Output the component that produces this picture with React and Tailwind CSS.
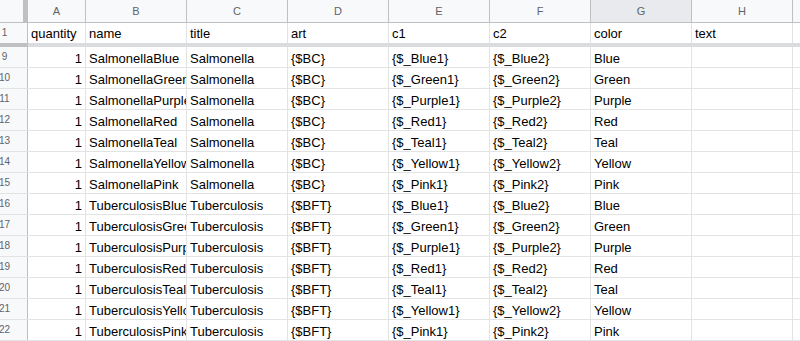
const COLS = [
  { key: "A", w: "w-[58px]" },
  { key: "B", w: "w-[101px]" },
  { key: "C", w: "w-[101px]" },
  { key: "D", w: "w-[101px]" },
  { key: "E", w: "w-[101px]" },
  { key: "F", w: "w-[101px]" },
  { key: "G", w: "w-[101px]" },
  { key: "H", w: "w-[101px]" },
];

const colors = ["Blue", "Green", "Purple", "Red", "Teal", "Yellow", "Pink"];

const rows = [
  ...colors.map((c, i) => ({
    n: 9 + i,
    cells: [1, `Salmonella${c}`, "Salmonella", "{$BC}", `{$_${c}1}`, `{$_${c}2}`, c, ""],
  })),
  ...colors.map((c, i) => ({
    n: 16 + i,
    cells: [1, `Tuberculosis${c}`, "Tuberculosis", "{$BFT}", `{$_${c}1}`, `{$_${c}2}`, c, ""],
  })),
];

const RowHeader = ({ n }) => (
  <div className="w-[28px] shrink-0 overflow-hidden border-r border-[#c0c0c0] bg-[#f8f9fa] flex items-center">
    <div className="w-[47px] -ml-[19px] shrink-0 text-center text-[10px] leading-[12px] text-[#5f6368]">
      {n}
    </div>
  </div>
);

const Cell = ({ w, children, right, pb = "pb-[1px]" }) => (
  <div
    className={`${w} shrink-0 overflow-hidden whitespace-nowrap border-r border-[#e2e3e3] px-[3px] leading-[15px] flex items-end ${pb} ${
      right ? "justify-end" : ""
    }`}
  >
    {children}
  </div>
);

export default function App() {
  return (
    <div
      className="w-[800px] h-[341px] overflow-hidden bg-white text-[13px] text-black"
      style={{ fontFamily: '"Liberation Sans", Arial, sans-serif' }}
    >
      {/* COLUMN LETTERS */}
      <div className="flex h-[23px] border-b border-[#c0c0c0] bg-[#f8f9fa]">
        <div className="w-[23px] shrink-0" />
        <div className="w-[5px] shrink-0 bg-[#c0c0c0]" />
        {COLS.map((c) => (
          <div
            key={c.key}
            className={`${c.w} shrink-0 border-r border-[#c0c0c0] flex items-center justify-center text-[11px] text-[#5f6368] ${
              c.key === "G" ? "bg-[#e8eaed]" : ""
            }`}
          >
            {c.key}
          </div>
        ))}
        <div className="flex-1" />
      </div>

      {/* FROZEN ROW 1 */}
      <div className="flex h-[20px]">
        <RowHeader n={1} />
        {["quantity", "name", "title", "art", "c1", "c2", "color", "text"].map((t, i) => (
          <Cell key={t} w={COLS[i].w} pb="pb-[2px]">
            {t}
          </Cell>
        ))}
        <div className="flex-1" />
      </div>

      {/* FREEZE BAR */}
      <div className="flex h-[4px]">
        <div className="w-[28px] shrink-0 bg-[#c0c0c0]" />
        <div className="flex-1 bg-[#dadce0]" />
      </div>

      {/* BODY */}
      {rows.map((r) => (
        <div key={r.n} className="flex h-[21px] border-b border-[#e2e3e3]">
          <RowHeader n={r.n} />
          {r.cells.map((v, i) => (
            <Cell key={i} w={COLS[i].w} right={i === 0}>
              {v}
            </Cell>
          ))}
          <div className="flex-1" />
        </div>
      ))}
    </div>
  );
}
